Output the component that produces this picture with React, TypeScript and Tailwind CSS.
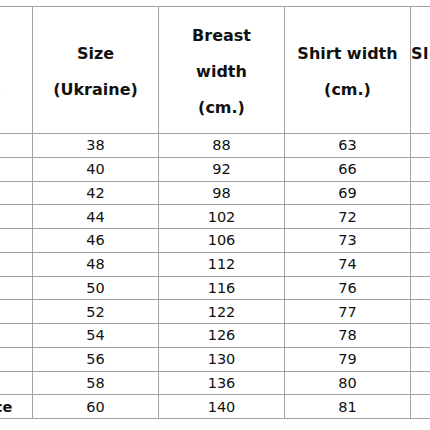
import React from "react";

const rows: [string, string, string, string, string][] = [
  ["", "38", "88", "63", ""],
  ["", "40", "92", "66", ""],
  ["", "42", "98", "69", ""],
  ["", "44", "102", "72", ""],
  ["", "46", "106", "73", ""],
  ["", "48", "112", "74", ""],
  ["", "50", "116", "76", ""],
  ["", "52", "122", "77", ""],
  ["", "54", "126", "78", ""],
  ["", "56", "130", "79", ""],
  ["", "58", "136", "80", ""],
  ["Plus choice", "60", "140", "81", ""],
];

export default function App() {
  return (
    <div
      className="w-[430px] h-[430px] overflow-hidden bg-white pt-[6px] text-[#111]"
      style={{ fontFamily: '"DejaVu Sans", Verdana, sans-serif' }}
    >
      <table className="border-collapse table-fixed -ml-[94px] w-[630px]">
        <colgroup>
          <col className="w-[126px]" />
          <col className="w-[126px]" />
          <col className="w-[126px]" />
          <col className="w-[126px]" />
          <col className="w-[126px]" />
        </colgroup>
        <thead>
          <tr className="h-[127px]">
            {[
              ["Size", "(Europe)"],
              ["Size", "(Ukraine)"],
              ["Breast", "width", "(cm.)"],
              ["Shirt width", "(cm.)"],
              ["Sleeve length", "(cm.)"],
            ].map((lines, i) => (
              <th
                key={i}
                className={
                  "border border-[#a3a3a3] p-0 pt-[4px] text-center align-middle font-bold text-[16px] leading-[36px] whitespace-nowrap " +
                  (i === 0 ? "pr-[15px] " : "") +
                  (i === 4 ? "tracking-[0.6px]" : "")
                }
              >
                {lines.map((l, j) => (
                  <div key={j}>{l}</div>
                ))}
              </th>
            ))}
          </tr>
        </thead>
        <tbody>
          {rows.map((r, i) => (
            <tr key={i} className="h-[23.75px]">
              {r.map((c, j) => (
                <td
                  key={j}
                  className={
                    "border border-[#a3a3a3] p-0 text-center align-middle text-[14.5px] leading-[22px] whitespace-nowrap " +
                    (j === 0 ? "font-bold pr-[6px]" : "")
                  }
                >
                  {c}
                </td>
              ))}
            </tr>
          ))}
        </tbody>
      </table>
    </div>
  );
}
